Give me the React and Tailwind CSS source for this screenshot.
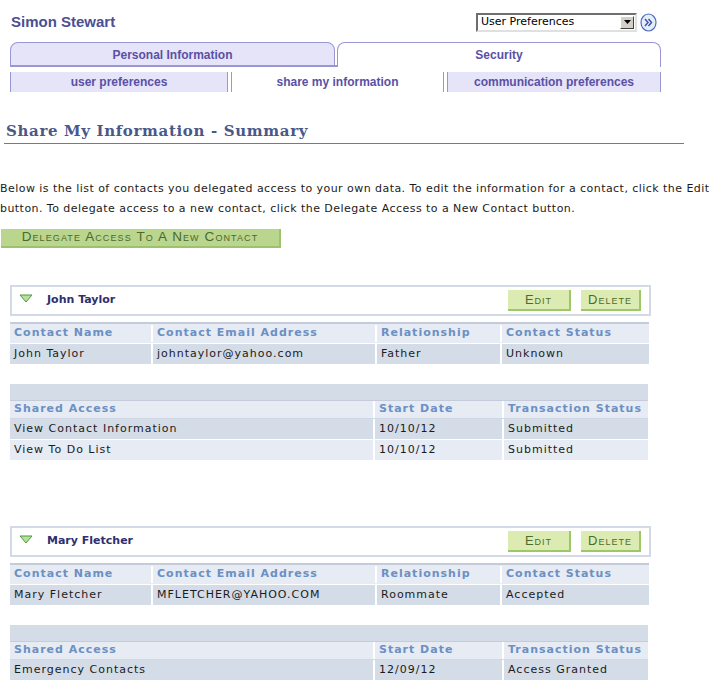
import React from "react";

const Contact = ({ name, email, rel, status, rows }) => (
  <div className="ml-[10px]">
    <div className="w-[641px] h-[31px] border-2 border-[#d3d9e7] flex items-center">
      <svg width="14" height="9" viewBox="0 0 14 9" className="ml-[7px] mt-[-4px]">
        <polygon points="1,1 13,1 7,8" fill="#b6e0a0" stroke="#4f9a3c" strokeWidth="1" />
      </svg>
      <span className="ml-[14px] text-[11px] font-bold text-[#2e2f6e]">{name}</span>
      <div className="ml-auto mr-[8px] flex gap-[10px]">
        <button className="w-[63px] h-[21px] bg-[#dcebb2] border-r-2 border-b-2 border-[#9cc86a] text-[13px] text-[#4d6c2c] tracking-[1px] [font-variant:small-caps] font-['Liberation_Sans',sans-serif]">Edit</button>
        <button className="w-[60px] h-[21px] bg-[#dcebb2] border-r-2 border-b-2 border-[#9cc86a] text-[13px] text-[#4d6c2c] tracking-[1px] [font-variant:small-caps] font-['Liberation_Sans',sans-serif]">Delete</button>
      </div>
    </div>
    <div className="mt-[6px] w-[639px] border-t-[2px] border-[#c4cbdb] text-[11px] tracking-[1px]">
      <div className="grid grid-cols-[143px_224px_125px_147px] h-[19px] bg-[#e6ebf4] font-bold text-[#6b90c3] items-center">
        <div className="pl-[4px] border-r-2 border-white">Contact Name</div>
        <div className="pl-[4px] border-r-2 border-white">Contact Email Address</div>
        <div className="pl-[4px] border-r-2 border-white">Relationship</div>
        <div className="pl-[4px]">Contact Status</div>
      </div>
      <div className="grid grid-cols-[143px_224px_125px_147px] h-[21px] bg-[#d4dce8] text-[#1b1b1b] items-center border-t border-white">
        <div className="pl-[4px] h-full flex items-center border-r-2 border-white">{name}</div>
        <div className="pl-[4px] h-full flex items-center border-r-2 border-white">{email}</div>
        <div className="pl-[4px] h-full flex items-center border-r-2 border-white">{rel}</div>
        <div className="pl-[4px] h-full flex items-center">{status}</div>
      </div>
    </div>
    <div className="mt-[20px] w-[638px] text-[11px] tracking-[1px]">
      <div className="h-[17px] bg-[#d4dce8] border-b border-[#c4cbdb]"></div>
      <div className="grid grid-cols-[365px_129px_144px] h-[18px] bg-[#e6ebf4] font-bold text-[#6b90c3] items-center border-b border-[#d0d7e5]">
        <div className="pl-[4px] h-full flex items-center border-r-2 border-white">Shared Access</div>
        <div className="pl-[4px] h-full flex items-center border-r-2 border-white">Start Date</div>
        <div className="pl-[4px] h-full flex items-center">Transaction Status</div>
      </div>
      {rows.map((r, i) => (
        <div
          key={i}
          className={`grid grid-cols-[365px_129px_144px] h-[21px] text-[#1b1b1b] items-center border-b border-white ${i % 2 === 0 ? "bg-[#d4dce8]" : "bg-[#e6ebf4]"}`}
        >
          <div className="pl-[4px] h-full flex items-center border-r-2 border-white">{r[0]}</div>
          <div className="pl-[4px] h-full flex items-center border-r-2 border-white">{r[1]}</div>
          <div className="pl-[4px] h-full flex items-center">{r[2]}</div>
        </div>
      ))}
    </div>
  </div>
);

export default function App() {
  return (
    <div className="w-[714px] h-[691px] bg-white overflow-hidden font-['DejaVu_Sans',sans-serif] text-[#1b1b1b]">
      {/* header */}
      <div className="flex items-center h-[30px] mt-[7px] pl-[11px]">
        <span className="font-['Liberation_Sans',sans-serif] font-bold text-[15px] text-[#4b4f93]">Simon Stewart</span>
        <div className="ml-auto mr-[57px] flex items-center gap-[3px]">
          <div className="w-[161px] h-[19px] border-2 border-t-[#6e6e6e] border-l-[#6e6e6e] border-r-[#e0e0e0] border-b-[#e0e0e0] bg-white flex items-center">
            <span className="pl-[3px] text-[11px] text-black font-['DejaVu_Sans',sans-serif]">User Preferences</span>
            <div className="ml-auto mr-[1px] w-[14px] h-[13px] bg-[#d4d0c8] border border-t-white border-l-white border-r-[#404040] border-b-[#404040] flex items-center justify-center">
              <svg width="7" height="4" viewBox="0 0 7 4"><polygon points="0,0 7,0 3.5,4" fill="#000" /></svg>
            </div>
          </div>
          <svg width="17" height="19" viewBox="0 0 17 19">
            <ellipse cx="8.5" cy="9.5" rx="7.5" ry="8.5" fill="#e6eefa" stroke="#4c6cc0" strokeWidth="1.2" />
            <path d="M5 6 L8 9.5 L5 13 M8.5 6 L11.5 9.5 L8.5 13" fill="none" stroke="#3b56b0" strokeWidth="1.5" />
          </svg>
        </div>
      </div>

      {/* main tabs */}
      <div className="mt-[5px] ml-[10px] w-[651px] font-['Liberation_Sans',sans-serif] font-bold text-[12px] text-[#5a50a6]">
        <div className="flex items-end h-[25px]">
          <div className="w-[325px] h-[25px] bg-[#e6e4f8] border border-[#9a96d4] border-b-2 rounded-t-[8px] flex items-center justify-center pt-[1px]">
            Personal Information
          </div>
          <div className="w-[2px] h-[25px] border-b-2 border-[#9a96d4]"></div>
          <div className="flex-1 h-[25px] bg-white border border-[#9a96d4] border-b-0 rounded-t-[8px] flex items-center justify-center">
            Security
          </div>
        </div>
        <div className="flex h-[20px] mt-[5px]">
          <div className="w-[217px] h-full bg-[#e6e4f8] border-l border-[#9a96d4] flex items-center justify-center">user preferences</div>
          <div className="w-[5px] h-full border-x border-[#9a96d4] bg-white"></div>
          <div className="w-[211px] h-full bg-white flex items-center justify-center">share my information</div>
          <div className="w-[5px] h-full border-x border-[#9a96d4] bg-white"></div>
          <div className="flex-1 h-full bg-[#e6e4f8] border-r border-[#9a96d4] flex items-center justify-center">communication preferences</div>
        </div>
      </div>

      {/* title */}
      <div className="mt-[29px] ml-[4px] w-[680px] border-b border-[#6d79aa] pb-[2px]">
        <h1 className="ml-[2px] font-['DejaVu_Serif',serif] font-bold text-[15px] leading-[20px] text-[#4a5889] tracking-[0.65px]">Share My Information - Summary</h1>
      </div>

      {/* paragraph */}
      <p className="mt-[35px] text-[11px] tracking-[0.45px] leading-[20px] text-[#1b1b1b] whitespace-nowrap">
        Below is the list of contacts you delegated access to your own data. To edit the information for a contact, click the Edit
        <br />
        button. To delegate access to a new contact, click the Delegate Access to a New Contact button.
      </p>

      <button className="mt-[10px] ml-[1px] w-[280px] h-[19px] bg-[#b9d58e] border-r-2 border-b-2 border-[#9cc26c] text-[13.5px] text-[#4a6a2b] tracking-[1.1px] [font-variant:small-caps] font-['Liberation_Sans',sans-serif] flex items-center justify-center">
        Delegate Access To A New Contact
      </button>

      <div className="mt-[37px]">
        <Contact
          name="John Taylor"
          email="johntaylor@yahoo.com"
          rel="Father"
          status="Unknown"
          rows={[
            ["View Contact Information", "10/10/12", "Submitted"],
            ["View To Do List", "10/10/12", "Submitted"],
          ]}
        />
      </div>
      <div className="mt-[65px]">
        <Contact
          name="Mary Fletcher"
          email="MFLETCHER@YAHOO.COM"
          rel="Roommate"
          status="Accepted"
          rows={[["Emergency Contacts", "12/09/12", "Access Granted"]]}
        />
      </div>
    </div>
  );
}
